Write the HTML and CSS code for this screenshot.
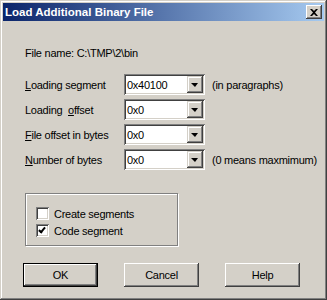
FILE: index.html
```html
<!DOCTYPE html>
<html lang="en">
<head>
  <meta charset="UTF-8">
  <title>Load Additional Binary File</title>
  <link rel="stylesheet" href="styles.css">
</head>
<body>

  <div class="window">
    <div class="titlebar">
      <span class="title">Load Additional Binary File</span>
      <button class="close">
        <svg width="8" height="7" viewBox="0 0 8 7">
          <path d="M0 0h2l2 2 2-2h2L5 3.5 8 7H6L4 5 2 7H0l3-3.5z" fill="#000"/>
        </svg>
      </button>
    </div>

    <div class="content">
      <p class="filename">File name: C:\TMP\2\bin</p>

      <div class="fields">
        <div class="row">
          <label><u>L</u>oading segment</label>
          <div class="combo"><span class="value">0x40100</span><span class="drop"></span></div>
          <span class="note">(in paragraphs)</span>
        </div>
        <div class="row">
          <label>Loading&nbsp; <u>o</u>ffset</label>
          <div class="combo"><span class="value">0x0</span><span class="drop"></span></div>
        </div>
        <div class="row">
          <label><u>F</u>ile offset in bytes</label>
          <div class="combo"><span class="value">0x0</span><span class="drop"></span></div>
        </div>
        <div class="row">
          <label><u>N</u>umber of bytes</label>
          <div class="combo"><span class="value">0x0</span><span class="drop"></span></div>
          <span class="note">(0 means maxmimum)</span>
        </div>
      </div>

      <div class="group">
        <div class="check"><span class="box"></span>Create segments</div>
        <div class="check"><span class="box checked"></span>Code segment</div>
      </div>

      <div class="buttons">
        <button class="btn default">OK</button>
        <button class="btn">Cancel</button>
        <button class="btn">Help</button>
      </div>
    </div>
  </div>

</body>
</html>
```

FILE: styles.css
```css
body {
  margin: 0;
  font-family: "Liberation Sans", Arial, sans-serif;
  font-size: 11px;
  letter-spacing: -0.25px;
  color: #000;
  background: #d4d0c8;
}
.window {
  width: 327px;
  height: 300px;
  box-sizing: border-box;
  padding: 3px;
  background: #d4d0c8;
  box-shadow: inset -1px -1px #404040, inset 1px 1px #d4d0c8,
              inset -2px -2px #808080, inset 2px 2px #fff;
}
.titlebar {
  height: 18px;
  display: flex;
  align-items: center;
  justify-content: space-between;
  padding: 0 2px 0 2px;
  background: linear-gradient(to right, #0a246a, #a6caf0);
}
.title {
  color: #fff;
  font-weight: bold;
  font-size: 11.5px;
  letter-spacing: 0;
}
.close {
  width: 16px;
  height: 14px;
  padding: 0;
  border: none;
  background: #d4d0c8;
  display: flex;
  align-items: center;
  justify-content: center;
  box-shadow: inset -1px -1px #404040, inset 1px 1px #fff,
              inset -2px -2px #808080, inset 2px 2px #d4d0c8;
}
.content {
  padding: 26px 0 0 22px;
}
.filename {
  margin: 0;
  line-height: 13px;
}
.fields {
  margin-top: 14px;
  display: flex;
  flex-direction: column;
  gap: 4px;
}
.row {
  display: flex;
  align-items: center;
  height: 21px;
}
.row label {
  width: 99px;
}
.combo {
  width: 81px;
  height: 21px;
  box-sizing: border-box;
  background: #fff;
  display: flex;
  align-items: center;
  justify-content: space-between;
  padding: 2px;
  box-shadow: inset 1px 1px #808080, inset -1px -1px #fff,
              inset 2px 2px #404040, inset -2px -2px #d4d0c8;
}
.value {
  padding-left: 1px;
}
.drop {
  width: 16px;
  height: 17px;
  background: #d4d0c8;
  box-shadow: inset -1px -1px #404040, inset 1px 1px #d4d0c8,
              inset -2px -2px #808080, inset 2px 2px #fff;
  position: relative;
}
.drop::after {
  content: "";
  position: absolute;
  left: 4px;
  top: 7px;
  border-left: 4px solid transparent;
  border-right: 3px solid transparent;
  border-top: 4px solid #000;
}
.note {
  margin-left: 7px;
}
.group {
  margin-top: 23px;
  width: 153px;
  height: 53px;
  box-sizing: border-box;
  border: 1px solid #808080;
  box-shadow: 1px 1px #fff, inset 1px 1px #fff;
  padding: 11px 0 0 10px;
}
.check {
  display: flex;
  align-items: center;
  height: 17px;
}
.box {
  width: 13px;
  height: 13px;
  box-sizing: border-box;
  background: #fff;
  margin-right: 5px;
  position: relative;
  box-shadow: inset 1px 1px #808080, inset -1px -1px #fff,
              inset 2px 2px #404040, inset -2px -2px #d4d0c8;
}
.box.checked::after {
  content: "";
  position: absolute;
  left: 4px;
  top: 2px;
  width: 2px;
  height: 5px;
  border: solid #000;
  border-width: 0 2px 2px 0;
  transform: rotate(40deg);
}
.buttons {
  margin-top: 17px;
  margin-left: -2px;
  display: flex;
  gap: 26px;
}
.btn {
  width: 75px;
  height: 24px;
  padding: 0;
  border: none;
  font-family: "Liberation Sans", Arial, sans-serif;
  font-size: 11px;
  letter-spacing: -0.25px;
  color: #000;
  background: #d4d0c8;
  box-shadow: inset -1px -1px #404040, inset 1px 1px #fff,
              inset -2px -2px #808080, inset 2px 2px #d4d0c8;
}
.btn.default {
  border: 1px solid #000;
  box-shadow: inset -1px -1px #404040, inset 1px 1px #fff,
              inset -2px -2px #808080;
}
```
